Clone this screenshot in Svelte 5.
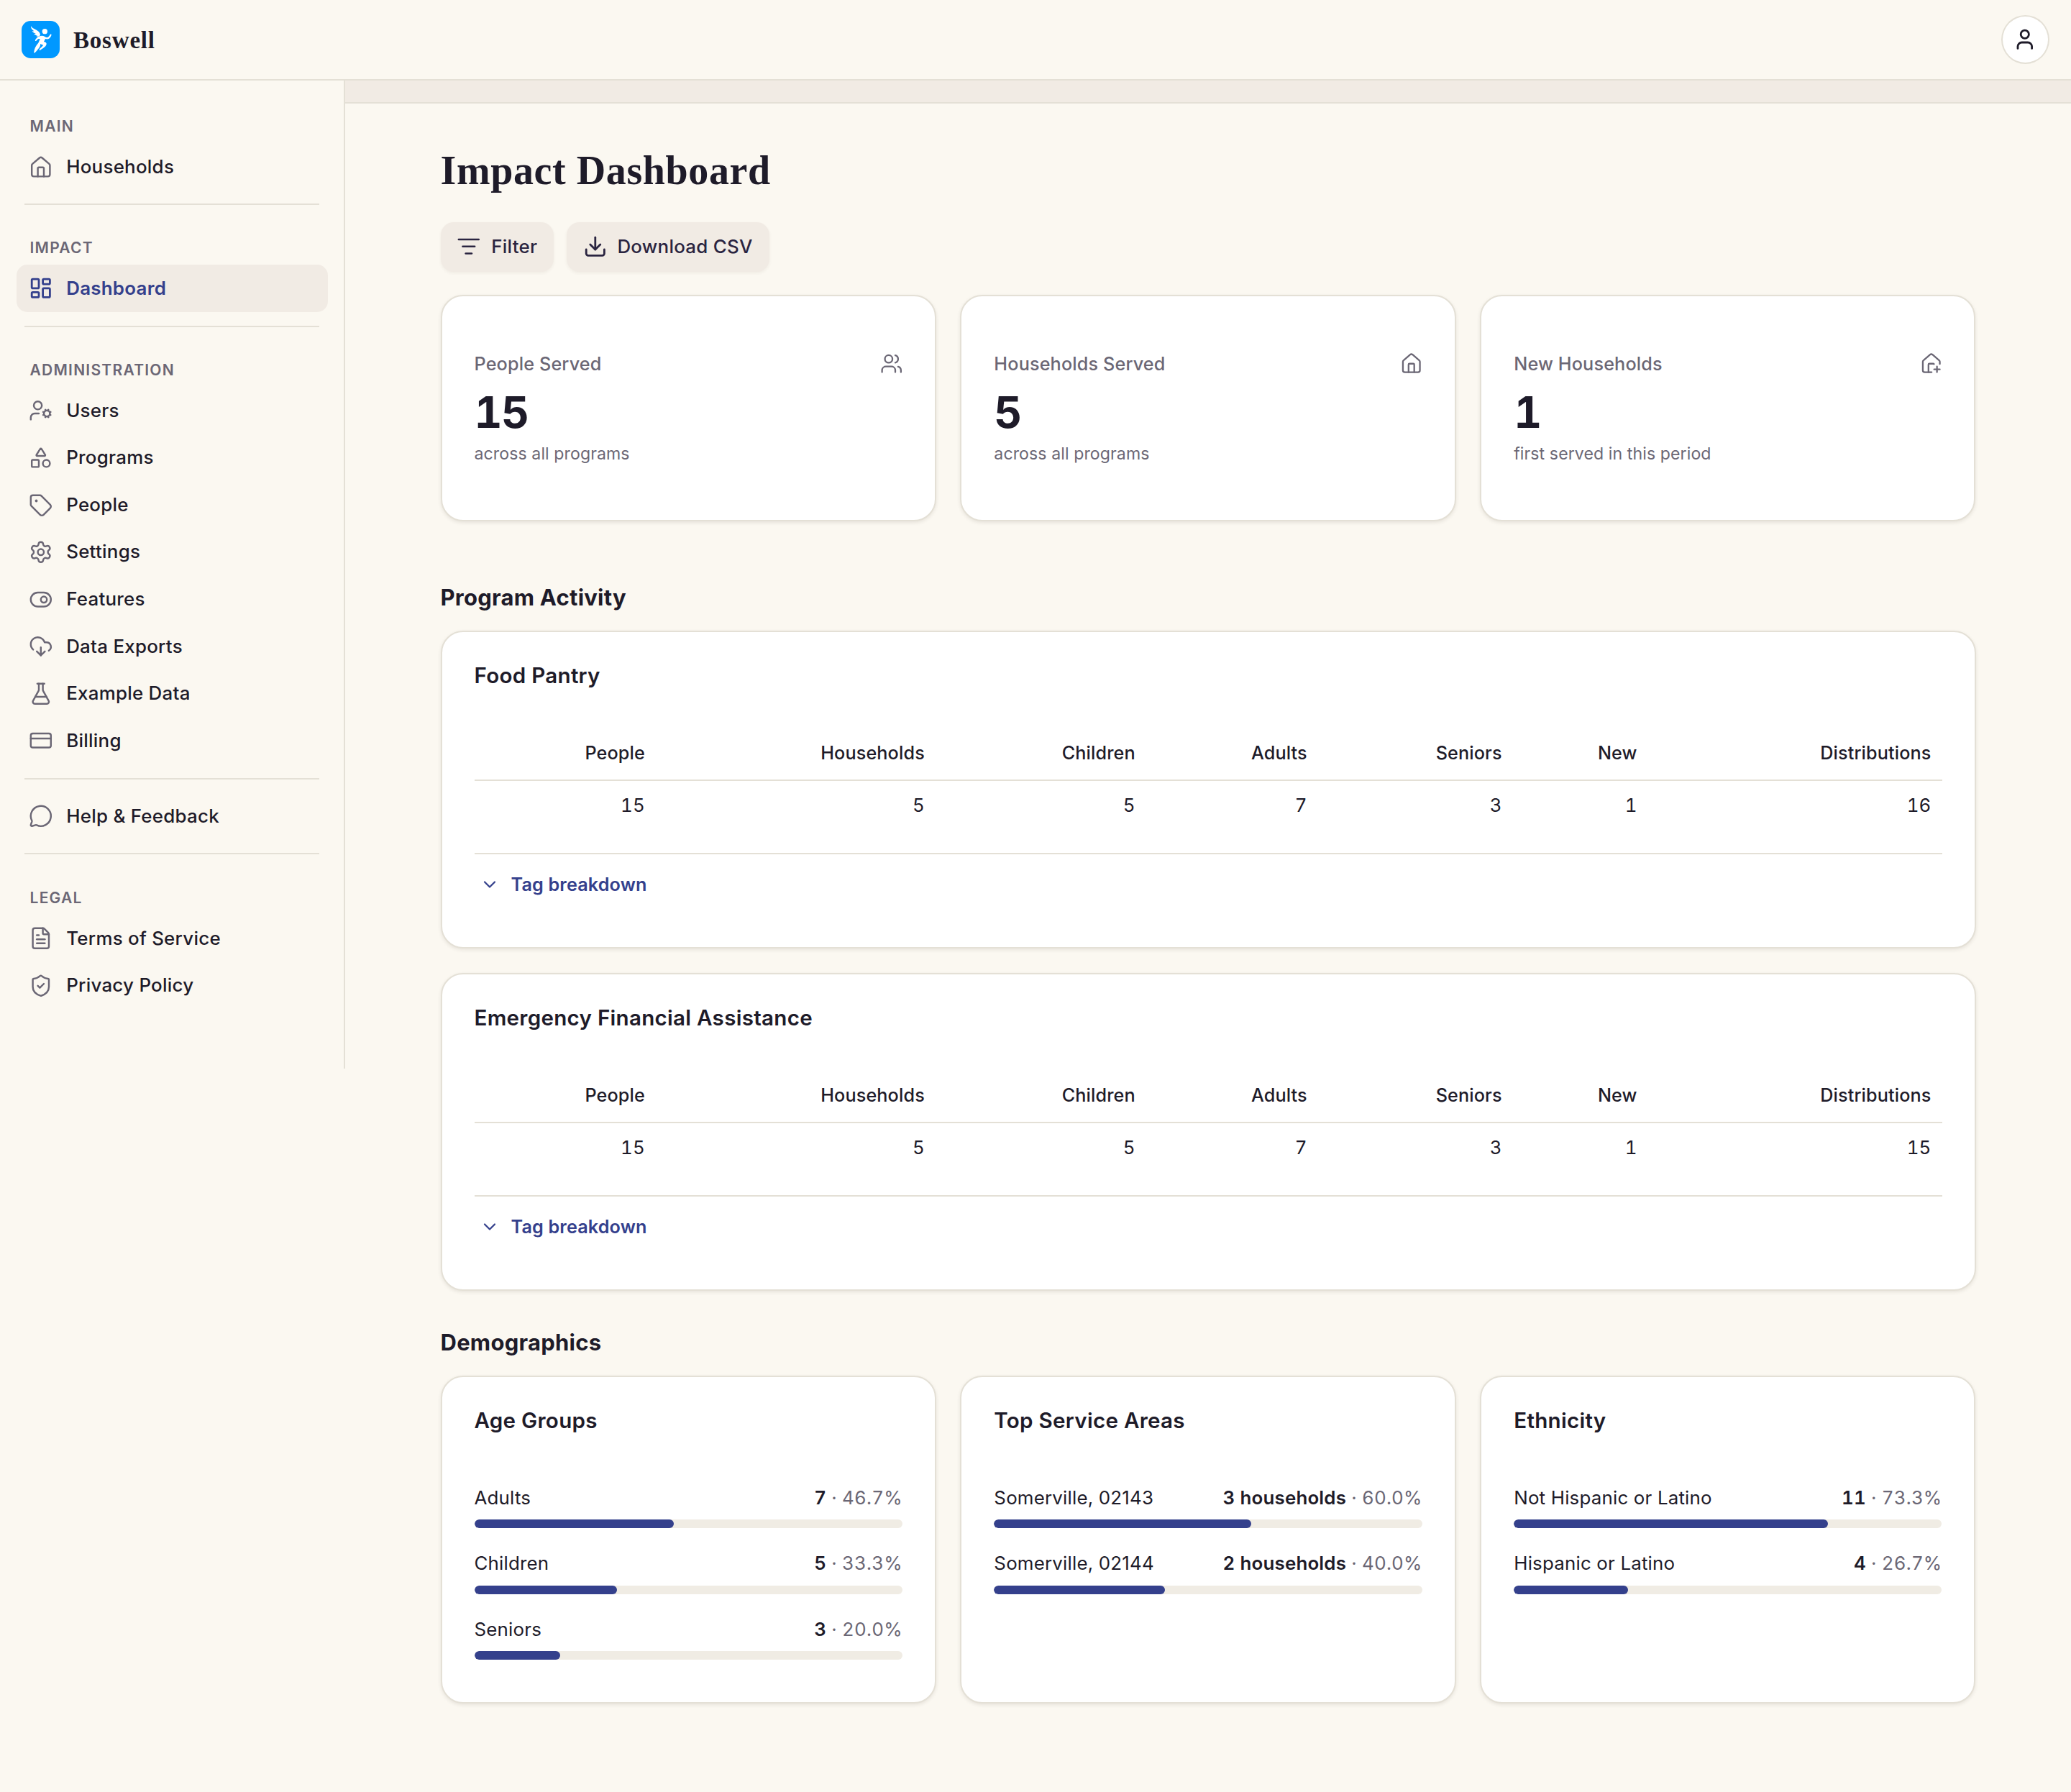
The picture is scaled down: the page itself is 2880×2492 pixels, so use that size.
<script>
  // Path helpers for the 24-unit icon grid
  const circle = (cx, cy, r) => `M${cx - r} ${cy}a${r} ${r} 0 1 0 ${2 * r} 0a${r} ${r} 0 1 0 ${-2 * r} 0`;
  const rect = (x, y, w, h, r) =>
    `M${x + r} ${y}h${w - 2 * r}a${r} ${r} 0 0 1 ${r} ${r}v${h - 2 * r}a${r} ${r} 0 0 1 ${-r} ${r}h${2 * r - w}a${r} ${r} 0 0 1 ${-r} ${-r}v${2 * r - h}a${r} ${r} 0 0 1 ${r} ${-r}z`;

  const icons = {
    home: ['M15 21v-8a1 1 0 0 0-1-1h-4a1 1 0 0 0-1 1v8', 'M3 10a2 2 0 0 1 .709-1.528l7-5.999a2 2 0 0 1 2.582 0l7 5.999A2 2 0 0 1 21 10v9a2 2 0 0 1-2 2H5a2 2 0 0 1-2-2z'],
    dashboard: [rect(3, 3, 7, 9, 1), rect(14, 3, 7, 5, 1), rect(14, 12, 7, 9, 1), rect(3, 16, 7, 5, 1)],
    userCog: ['M10 15H6a4 4 0 0 0-4 4v2', 'm14.305 16.53.923-.382', 'm15.228 13.852-.923-.383', 'm16.852 12.228-.383-.923', 'm16.852 17.772-.383.924', 'm19.148 12.228.383-.923', 'm19.53 18.696-.382-.924', 'm20.772 13.852.924-.383', 'm20.772 16.148.924.383', circle(18, 15, 3), circle(9, 7, 4)],
    shapes: ['M8.3 10a.7.7 0 0 1-.626-1.079L11.4 3a.7.7 0 0 1 1.198-.043L16.3 8.9a.7.7 0 0 1-.572 1.1Z', rect(3, 14, 7, 7, 1), circle(17.5, 17.5, 3.5)],
    tag: ['M12.586 2.586A2 2 0 0 0 11.172 2H4a2 2 0 0 0-2 2v7.172a2 2 0 0 0 .586 1.414l8.704 8.704a2.426 2.426 0 0 0 3.42 0l6.58-6.58a2.426 2.426 0 0 0 0-3.42z', circle(7.5, 7.5, 0.5)],
    settings: ['M9.671 4.136a2.34 2.34 0 0 1 4.659 0 2.34 2.34 0 0 0 3.319 1.915 2.34 2.34 0 0 1 2.33 4.033 2.34 2.34 0 0 0 0 3.831 2.34 2.34 0 0 1-2.33 4.033 2.34 2.34 0 0 0-3.319 1.915 2.34 2.34 0 0 1-4.659 0 2.34 2.34 0 0 0-3.32-1.915 2.34 2.34 0 0 1-2.33-4.033 2.34 2.34 0 0 0 0-3.831A2.34 2.34 0 0 1 6.35 6.051a2.34 2.34 0 0 0 3.319-1.915', circle(12, 12, 3)],
    toggle: [circle(15, 12, 3), rect(2, 5, 20, 14, 7)],
    cloudDownload: ['M12 13v8l-4-4', 'm12 21 4-4', 'M4.393 15.269A7 7 0 1 1 15.71 8h1.79a4.5 4.5 0 0 1 2.436 8.284'],
    flask: ['M14 2v6a2 2 0 0 0 .245.96l5.51 10.08A2 2 0 0 1 18 22H6a2 2 0 0 1-1.755-2.96l5.51-10.08A2 2 0 0 0 10 8V2', 'M6.453 15h11.094', 'M8.5 2h7'],
    card: [rect(2, 5, 20, 14, 2), 'M2 10h20'],
    message: ['M2.992 16.342a2 2 0 0 1 .094 1.167l-1.065 3.29a1 1 0 0 0 1.236 1.168l3.413-.998a2 2 0 0 1 1.099.092 10 10 0 1 0-4.777-4.719'],
    file: ['M6 22a2 2 0 0 1-2-2V4a2 2 0 0 1 2-2h8a2.4 2.4 0 0 1 1.704.706l3.588 3.588A2.4 2.4 0 0 1 20 8v12a2 2 0 0 1-2 2z', 'M14 2v5a1 1 0 0 0 1 1h5', 'M10 9H8', 'M16 13H8', 'M16 17H8'],
    shield: ['M20 13c0 5-3.5 7.5-7.66 8.95a1 1 0 0 1-.67-.01C7.5 20.5 4 18 4 13V6a1 1 0 0 1 1-1c2 0 4.5-1.2 6.24-2.72a1.17 1.17 0 0 1 1.52 0C14.51 3.81 17 5 19 5a1 1 0 0 1 1 1z', 'm9 12 2 2 4-4'],
    filter: ['M2 5h20', 'M6 12h12', 'M9 19h6'],
    download: ['M12 15V3', 'M21 15v4a2 2 0 0 1-2 2H5a2 2 0 0 1-2-2v-4', 'm7 10 5 5 5-5'],
    users: ['M16 21v-2a4 4 0 0 0-4-4H6a4 4 0 0 0-4 4v2', 'M16 3.128a4 4 0 0 1 0 7.744', 'M22 21v-2a4 4 0 0 0-3-3.87', circle(9, 7, 4)],
    homePlus: ['M12.35 21H5a2 2 0 0 1-2-2v-9a2 2 0 0 1 .71-1.53l7-6a2 2 0 0 1 2.58 0l7 6A2 2 0 0 1 21 10v2.35', 'M14.8 12.4a1 1 0 0 0-.8-.4h-4a1 1 0 0 0-1 1v8', 'M15 18h6', 'M18 15v6'],
    user: ['M19 21v-2a4 4 0 0 0-4-4H9a4 4 0 0 0-4 4v2', circle(12, 7, 4)],
    chevron: ['m6 9 6 6 6-6']
  };

  const nav = [
    { title: 'Main', items: [['Households', 'home']] },
    { title: 'Impact', items: [['Dashboard', 'dashboard']] },
    {
      title: 'Administration',
      items: [['Users', 'userCog'], ['Programs', 'shapes'], ['People', 'tag'], ['Settings', 'settings'], ['Features', 'toggle'], ['Data Exports', 'cloudDownload'], ['Example Data', 'flask'], ['Billing', 'card']]
    },
    { title: '', items: [['Help & Feedback', 'message']] },
    { title: 'Legal', items: [['Terms of Service', 'file'], ['Privacy Policy', 'shield']] }
  ];
  const current = 'Dashboard';

  const stats = [
    { label: 'People Served', value: '15', note: 'across all programs', icon: 'users' },
    { label: 'Households Served', value: '5', note: 'across all programs', icon: 'home' },
    { label: 'New Households', value: '1', note: 'first served in this period', icon: 'homePlus' }
  ];

  const columns = ['People', 'Households', 'Children', 'Adults', 'Seniors', 'New', 'Distributions'];
  const programs = [
    { name: 'Food Pantry', values: [15, 5, 5, 7, 3, 1, 16] },
    { name: 'Emergency Financial Assistance', values: [15, 5, 5, 7, 3, 1, 15] }
  ];

  const demographics = [
    { title: 'Age Groups', rows: [['Adults', '7', 46.7], ['Children', '5', 33.3], ['Seniors', '3', 20]] },
    { title: 'Top Service Areas', rows: [['Somerville, 02143', '3 households', 60], ['Somerville, 02144', '2 households', 40]] },
    { title: 'Ethnicity', rows: [['Not Hispanic or Latino', '11', 73.3], ['Hispanic or Latino', '4', 26.7]] }
  ];
</script>

{#snippet icon(name, cls = '')}
  <svg class="icon {cls}" viewBox="0 0 24 24" aria-hidden="true">
    {#each icons[name] as d}<path {d} />{/each}
  </svg>
{/snippet}

<div class="app">
  <header class="topbar">
    <div class="brand">
      <svg class="logo" viewBox="0 0 159 156" aria-hidden="true">
        <rect width="159" height="156" rx="38" fill="#0098ff" />
        <g fill="#fff">
          <circle cx="97" cy="44" r="11" />
          <path d="M39 22C45 31 53 34 62 38C70 42 76 48 78 56L76 62C71 66 65 66 60 62C63 62 65 61 66 60C60 60 54 58 51 53C54 54 57 54 59 53C52 51 46 48 44 42C47 43 50 44 52 43C44 38 38 31 39 22Z" />
          <path d="M72 65C80 62 89 61 96 65C101 68 105 70 110 68C114 66 117 60 120 56C123 55 126 57 124 61C121 68 118 74 111 76C106 77 102 75 99 75L93 87C100 89 104 91 104 96C104 104 96 110 90 114C85 117 81 121 75 123C73 121 75 117 78 114C83 109 89 105 90 101C86 99 81 98 78 96C80 104 74 112 69 118C63 125 59 131 53 135C51 132 52 126 54 119C57 109 63 99 70 92C73 86 75 80 77 75C71 74 67 76 64 80C62 83 60 84 57 84C55 80 63 69 72 65Z" />
        </g>
      </svg>
      <span class="brand-name">Boswell</span>
    </div>
    <button class="avatar" aria-label="Account">{@render icon('user', 'strong')}</button>
  </header>

  <div class="body">
    <nav class="sidebar">
      {#each nav as group}
        <section class="group">
          {#if group.title}<h2 class="group-title">{group.title}</h2>{/if}
          {#each group.items as [label, glyph]}
            <a class="item" class:active={label === current} class:lone={!group.title} href="#top">
              {@render icon(glyph)}
              <span>{label}</span>
            </a>
          {/each}
        </section>
      {/each}
    </nav>

    <main class="main">
      <div class="band"></div>
      <div class="content">
        <h1>Impact Dashboard</h1>
        <div class="actions">
          <button class="action">{@render icon('filter')}<span>Filter</span></button>
          <button class="action">{@render icon('download', 'strong')}<span>Download CSV</span></button>
        </div>

        <div class="grid">
          {#each stats as s}
            <article class="panel stat">
              <div class="stat-head">
                <span class="stat-label">{s.label}</span>
                {@render icon(s.icon, 'small')}
              </div>
              <div class="stat-value">{s.value}</div>
              <div class="stat-note">{s.note}</div>
            </article>
          {/each}
        </div>

        <h2 class="section-title first">Program Activity</h2>
        <div class="stack">
          {#each programs as p}
            <article class="panel program">
              <h3>{p.name}</h3>
              <div class="cols head">
                {#each columns as c}<span>{c}</span>{/each}
              </div>
              <div class="cols values">
                {#each p.values as v}<span>{v}</span>{/each}
              </div>
              <div class="breakdown">
                <button class="disclose">{@render icon('chevron', 'tiny')}<span>Tag breakdown</span></button>
              </div>
            </article>
          {/each}
        </div>

        <h2 class="section-title">Demographics</h2>
        <div class="grid">
          {#each demographics as d}
            <article class="panel demo">
              <h3>{d.title}</h3>
              <div class="rows">
                {#each d.rows as [label, count, pct]}
                  <div class="row">
                    <div class="row-text">
                      <span>{label}</span>
                      <span class="amount"><b>{count}</b> · {pct.toFixed(1)}%</span>
                    </div>
                    <div class="track"><div class="fill" style:width="{pct}%"></div></div>
                  </div>
                {/each}
              </div>
            </article>
          {/each}
        </div>
      </div>
    </main>
  </div>
</div>

<style>
  :global(body) {
    background: #fbf8f1;
  }
  .app {
    --ink: #1e1b29;
    --muted: #6b6775;
    --line: #e4e0d6;
    --soft: #f1ebe4;
    --accent: #34408c;
    min-height: 2492px;
    box-sizing: border-box;
    color: var(--ink);
    font-family: Inter, sans-serif;
    font-size: 25.9px;
    line-height: 34px;
    letter-spacing: 0.01em;
  }
  .app :global(*) {
    box-sizing: border-box;
  }
  h1, h2, h3 {
    margin: 0;
  }
  button {
    font: inherit;
    letter-spacing: inherit;
    color: inherit;
    border: 0;
    padding: 0;
    background: none;
  }
  .icon {
    flex: none;
    display: block;
    width: 33.6px;
    height: 33.6px;
    fill: none;
    stroke: currentColor;
    stroke-width: 1.75;
    stroke-linecap: round;
    stroke-linejoin: round;
  }
  .icon.strong { stroke-width: 2; }
  .icon.small { width: 31.5px; height: 31.5px; margin-right: -1px; }
  .icon.tiny { width: 28px; height: 28px; stroke-width: 1.9; }

  .topbar {
    height: 112px;
    border-bottom: 2px solid var(--line);
    display: flex;
    align-items: center;
    justify-content: space-between;
    padding: 0 30.5px 0 30px;
  }
  .brand {
    display: flex;
    align-items: center;
    gap: 19px;
  }
  .logo {
    width: 53px;
    height: 52px;
    display: block;
  }
  .brand-name {
    font-family: 'Liberation Serif', serif;
    font-weight: 700;
    font-size: 33px;
    letter-spacing: 0.8px;
    padding-top: 1px;
  }
  .avatar {
    width: 67px;
    height: 68px;
    border-radius: 50%;
    border: 2px solid var(--line);
    background: #fff;
    display: grid;
    place-items: center;
  }

  .body {
    display: flex;
    align-items: flex-start;
  }
  .sidebar {
    width: 480px;
    height: 1374px;
    flex: none;
    border-right: 2px solid var(--line);
    padding: 23.2px 22px 0 23px;
  }
  .group + .group::before {
    content: '';
    display: block;
    height: 2px;
    margin: 18.6px 12px 0 11px;
    background: var(--line);
  }
  .group:nth-child(2)::before {
    margin-top: 17.2px;
  }
  .group-title {
    padding: 45.2px 0 8.6px 18.5px;
    font-size: 21px;
    line-height: 30px;
    font-weight: 600;
    letter-spacing: 0.06em;
    text-transform: uppercase;
    color: var(--muted);
  }
  .group:first-child .group-title {
    padding-top: 26px;
  }
  .item {
    height: 65.6px;
    display: flex;
    align-items: center;
    gap: 18.4px;
    padding-left: 17.2px;
    border-radius: 15px;
    color: var(--ink);
    font-weight: 500;
    text-decoration: none;
  }
  .item span {
    padding-bottom: 0.8px;
  }
  .item .icon {
    color: var(--muted);
  }
  .item.lone {
    margin-top: 18.6px;
  }
  .item.active {
    background: var(--soft);
    color: var(--accent);
    font-weight: 600;
  }
  .item.active .icon {
    color: var(--accent);
    stroke-width: 2;
  }

  .main {
    flex: 1;
    min-width: 0;
  }
  .band {
    height: 32px;
    background: var(--soft);
    border-bottom: 2px solid var(--line);
  }
  .content {
    width: 2135px;
    margin: 0 auto;
    padding-top: 59.5px;
  }
  h1 {
    font: 700 56px/66px 'Liberation Serif', serif;
    letter-spacing: 0.6px;
  }
  .actions {
    display: flex;
    gap: 17.5px;
    margin: 39.5px 0 32.5px;
  }
  .action {
    display: flex;
    align-items: center;
    gap: 14.3px;
    height: 68.5px;
    padding: 0 23px 0 22.8px;
    border-radius: 18px;
    background: var(--soft);
    color: #2a2440;
    font-weight: 500;
    box-shadow: 0 2px 4px rgba(60, 45, 30, 0.06);
  }

  .grid {
    display: grid;
    grid-template-columns: repeat(3, 1fr);
    gap: 33.6px;
  }
  .stack {
    display: grid;
    gap: 34px;
  }
  .panel {
    background: #fff;
    border: 2px solid var(--line);
    border-radius: 31px;
    padding: 0 45px;
    box-shadow: 0 2px 5px rgba(60, 50, 40, 0.1);
  }
  .stat {
    height: 315px;
    padding-top: 77.2px;
  }
  .stat-head {
    display: flex;
    justify-content: space-between;
    align-items: center;
    height: 34px;
    color: var(--muted);
  }
  .stat-label {
    font-size: 25.2px;
    letter-spacing: 0.006em;
    font-weight: 500;
  }
  .stat-value {
    margin: 20.2px 0 12px;
    font-size: 60.5px;
    line-height: 60px;
    font-weight: 700;
    font-variant-numeric: tabular-nums;
    letter-spacing: -0.025em;
  }
  .stat-note {
    font-size: 23.1px;
    line-height: 32px;
    letter-spacing: 0.004em;
    color: var(--muted);
  }

  .section-title {
    margin: 52px 0 26.3px;
    font-size: 31px;
    line-height: 40px;
    font-weight: 700;
    letter-spacing: 0.008em;
  }
  .section-title.first {
    margin: 86.2px 0 25.8px;
  }
  h3 {
    padding-top: 40.2px;
    font-size: 29.6px;
    line-height: 40px;
    font-weight: 600;
  }
  .program {
    height: 442px;
  }
  .cols {
    display: grid;
    grid-template-columns: 252.5fr 389fr 293fr 239fr 271fr 188fr 409fr;
    text-align: right;
    font-size: 25.2px;
    letter-spacing: 0.005em;
  }
  .cols span {
    padding-right: 15px;
  }
  .head {
    margin-top: 71.2px;
    padding-bottom: 19.8px;
    border-bottom: 2px solid var(--line);
    font-weight: 500;
  }
  .values {
    padding: 16.4px 0 49.6px;
    border-bottom: 2px solid var(--line);
    font-size: 25.9px;
    font-variant-numeric: tabular-nums;
  }
  .breakdown {
    padding: 25.2px 0 0 7px;
  }
  .disclose {
    display: flex;
    align-items: center;
    gap: 16px;
    color: var(--accent);
    font-size: 25.2px;
    letter-spacing: 0.006em;
    font-weight: 600;
  }

  .demo {
    height: 455.5px;
  }
  .rows {
    display: grid;
    gap: 32.5px;
    margin-top: 70.2px;
  }
  .row-text {
    display: flex;
    justify-content: space-between;
    margin-bottom: 13.4px;
    letter-spacing: 0.007em;
  }
  .amount {
    color: var(--muted);
    font-variant-numeric: tabular-nums;
  }
  .amount b {
    color: var(--ink);
    font-weight: 600;
  }
  .track {
    height: 11.8px;
    border-radius: 6px;
    background: #f0ece4;
    overflow: hidden;
  }
  .fill {
    height: 100%;
    border-radius: 6px;
    background: var(--accent);
  }
</style>
